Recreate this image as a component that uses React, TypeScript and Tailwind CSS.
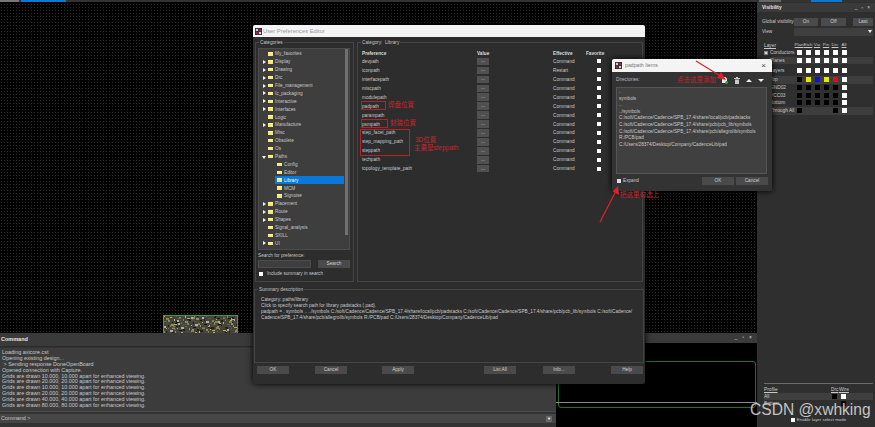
const categories = [
  { name: "My_favorites", arrow: "" },
  { name: "Display", arrow: "right" },
  { name: "Drawing", arrow: "right" },
  { name: "Drc", arrow: "right" },
  { name: "File_management", arrow: "right" },
  { name: "Ic_packaging", arrow: "right" },
  { name: "Interactive", arrow: "right" },
  { name: "Interfaces", arrow: "right" },
  { name: "Logic", arrow: "" },
  { name: "Manufacture", arrow: "right" },
  { name: "Misc", arrow: "" },
  { name: "Obsolete", arrow: "" },
  { name: "Os", arrow: "" },
  { name: "Paths", arrow: "down" },
  { name: "Config", arrow: "", child: true },
  { name: "Editor", arrow: "", child: true },
  { name: "Library", arrow: "", child: true, active: true },
  { name: "MCM", arrow: "", child: true },
  { name: "Signoise", arrow: "", child: true },
  { name: "Placement", arrow: "right" },
  { name: "Route", arrow: "right" },
  { name: "Shapes", arrow: "right" },
  { name: "Signal_analysis", arrow: "" },
  { name: "SKILL", arrow: "" },
  { name: "UI", arrow: "right" },
  { name: "Vi", arrow: "right" },
];

const prefs = [
  { name: "devpath", effective: "Command" },
  { name: "iconpath", effective: "Restart" },
  { name: "interfacepath", effective: "Command" },
  { name: "miscpath", effective: "Command" },
  { name: "modulepath", effective: "Command" },
  { name: "padpath", effective: "Command" },
  { name: "parampath", effective: "Command" },
  { name: "psmpath", effective: "Command" },
  { name: "step_facet_path", effective: "Command" },
  { name: "step_mapping_path", effective: "Command" },
  { name: "steppath", effective: "Command" },
  { name: "techpath", effective: "Command" },
  { name: "topology_template_path", effective: "Command" },
];

const directories = [
  ".",
  "symbols",
  "..",
  "../symbols",
  "C:/soft/Cadence/Cadence/SPB_17.4/share/local/pcb/padstacks",
  "C:/soft/Cadence/Cadence/SPB_17.4/share/pcb/pcb_lib/symbols",
  "C:/soft/Cadence/Cadence/SPB_17.4/share/pcb/allegrolib/symbols",
  "R:/PCB/pad",
  "C:/Users/28374/Desktop/Company/CadenceLib/pad",
];

const commandLog = [
  "Loading axicore.cst",
  "Opening existing design...",
  " > Sending response DoneOpenBoard",
  "Opened connection with Capture.",
  "Grids are drawn 10.000, 10.000 apart for enhanced viewing.",
  "Grids are drawn 20.000, 20.000 apart for enhanced viewing.",
  "Grids are drawn 10.000, 10.000 apart for enhanced viewing.",
  "Grids are drawn 20.000, 20.000 apart for enhanced viewing.",
  "Grids are drawn 40.000, 40.000 apart for enhanced viewing.",
  "Grids are drawn 80.000, 80.000 apart for enhanced viewing.",
];

const visRows = [
  { label: "Conductors", check: true, cells: ["w", "w", "w", "w", "w", "w"], band: false },
  { label: "Planes", cells: ["w", "w", "w", "w", "w", "w"], band: true },
  { label: "Layers", cells: ["w", "w", "w", "w", "w", "w"], band: false, gap: true },
  { label: "Top", cells: ["k", "#e6e600", "#1010e0", "#e6e600", "#e01010", "w"], band: true, gap: true },
  { label: "GND02", cells: ["k", "k", "k", "k", "k", "w"], band: false },
  { label: "VCC03", cells: ["k", "k", "k", "k", "k", "w"], band: false },
  { label: "Bottom", cells: ["k", "k", "k", "k", "k", "w"], band: false },
  { label: "Through All", cells: ["k", "", "", "", "k", "w"], band: true },
];

const pcbBits = Array.from({ length: 170 }, (_, i) => ({
  x: (i * 29 + (i % 7) * 11) % 74,
  y: (i * 13 + (i % 5) * 3) % 18,
  w: 1 + (i % 3),
  h: 1 + (i % 2),
  c: ["#b8b030", "#8a8a78", "#565648", "#b0b0a0", "#141414", "#8a8430", "#66665c", "#1e1e1e"][i % 8],
}));

function AppIcon() {
  return (
    <svg width="7" height="7" viewBox="0 0 8 8" className="shrink-0">
      <rect width="8" height="8" fill="#2c2c34" />
      <rect x="1" y="1" width="2.5" height="2.5" fill="#d0d0d8" />
      <rect x="4.5" y="1" width="2.5" height="2.5" fill="#b02040" />
      <rect x="1" y="4.5" width="2.5" height="2.5" fill="#b02040" />
      <rect x="4.5" y="4.5" width="2.5" height="2.5" fill="#d0d0d8" />
    </svg>
  );
}

function Folder() {
  return <span className="block w-[5px] h-[3.5px] bg-[#f4e878] shrink-0 mr-[2px] border-t border-[#fff6a0]" />;
}

function Arrow({ dir }: { dir: string }) {
  if (!dir) return <span className="block w-[4px] shrink-0" />;
  return (
    <svg width="4" height="4" viewBox="0 0 4 4" className="shrink-0">
      <polygon points={dir === "down" ? "0,1 4,1 2,4" : "1,0 4,2 1,4"} fill="#f2f2f2" />
    </svg>
  );
}

function GroupTitle({ children }: { children: React.ReactNode }) {
  return (
    <span className="absolute -top-[3px] left-[3px] bg-[#2d2d2d] px-[1px] text-[4.7px] leading-[6px] text-[#c4c4c4]">
      {children}
    </span>
  );
}

function DlgButton({ label, className }: { label: string; className: string }) {
  return (
    <button className={`h-[8px] bg-[#4a4a4a] text-[4.7px] leading-[8px] text-[#cfcfcf] ${className}`}>{label}</button>
  );
}

function RedBox({ className }: { className: string }) {
  return <div className={`absolute border border-[#b5202a] ${className}`} />;
}

function RedNote({ text, className }: { text: string; className: string }) {
  return <span className={`absolute text-[6.5px] leading-[8px] text-[#c6262e] whitespace-nowrap ${className}`}>{text}</span>;
}

export default function App() {
  return (
    <div
      className="relative w-[875px] h-[427px] overflow-hidden bg-black text-[5px] text-[#c8c8c8]"
      style={{ fontFamily: '"Liberation Sans", "Noto Sans CJK SC", sans-serif' }}
    >
      {/* board canvas */}
      <div className="absolute inset-0 bg-[radial-gradient(#2c2c2c_0.6px,transparent_0.7px)] bg-[length:3px_3px]" />
      <div className="absolute top-0 left-0 w-[757px] h-[2px] bg-[#333333] flex">
        <span className="block w-[19px] bg-[#777777]" />
        <span className="block ml-[2px] w-[45px] bg-[#0a78d8]" />
      </div>

      {/* pcb */}
      <div className="absolute left-[163px] top-[315px] w-[75px] h-[18px] border border-b-0 border-[#2aa050] bg-[#44443a] overflow-hidden">
        <svg width="75" height="18" viewBox="0 0 75 18">
          {pcbBits.map((b, i) => (
            <rect key={i} x={b.x} y={b.y} width={b.w} height={b.h} fill={b.c} />
          ))}
        </svg>
      </div>

      {/* command window */}
      <div className="absolute left-0 top-[333px] w-[556px] h-[94px] bg-[#333333] flex flex-col text-[5.4px]">
        <div className="h-[14px] bg-[#3a3a3a] pl-[1px] font-bold text-[5.5px] leading-[12px] text-[#e6e6e6] border-b border-[#2a2a2a]">
          Command
        </div>
        <div className="mt-[1px] h-[64px] bg-[#3c3c3c] pl-[2px] pt-[2px] border-b border-[#4a4a4a]">
          {commandLog.map((line, i) => (
            <div key={i} className="h-[5.9px] leading-[5.9px] whitespace-pre text-[#c8c8c8]">{line}</div>
          ))}
        </div>
        <div className="mt-[2px] h-[9px] bg-[#464646] pl-[1px] flex items-center justify-between pr-[4px]">
          <span>Command &gt;</span>
          <span className="block w-[6px] h-[6px] bg-[#666666] text-center text-[4px] leading-[6px] text-white">▼</span>
        </div>
      </div>

      {/* lower canvas window */}
      <div className="absolute left-[556px] top-[333px] w-[201px] h-[94px] bg-black flex flex-col">
        <div className="h-[10px] bg-[#3a3a3a] flex items-center justify-end gap-[5px] pr-[5px] text-[5px] text-[#dddddd]">
          <span>_</span>
          <span>▫</span>
          <span>×</span>
        </div>
        <div className="relative grow">
          <div className="absolute left-[2px] top-[18px] right-[1px] h-[47px] border border-[#14772f] rounded-[3px]" />
          <div className="absolute left-0 right-0 top-[59px] h-[1px] bg-[#8a8a8a]" />
        </div>
      </div>

      {/* visibility panel */}
      <aside className="absolute right-0 top-0 w-[118px] h-[427px] bg-[#2f2f2f] flex flex-col text-[4.8px]">
        <div className="h-[2px] flex bg-[#333333]">
          <span className="block ml-[2px] w-[22px] bg-[#666666]" />
          <span className="block ml-[30px] w-[31px] bg-[#0a78d8]" />
        </div>
        <div className="h-[9px] mt-[1px] bg-[#3a3a3a] pl-[5px] flex items-center justify-between pr-[5px] font-bold text-[#e0e0e0]">
          <span>Visibility</span>
          <span className="flex gap-[4px] font-normal text-[#cccccc]"><span>_</span><span>▫</span><span>×</span></span>
        </div>
        <div className="pl-[5px] pr-[2px] pt-[5px]">
          <div className="flex items-center h-[9px]">
            <span className="whitespace-nowrap">Global visibility</span>
            <div className="flex ml-auto">
              <button className="w-[24px] h-[8px] bg-[#4a4a4a] leading-[8px] text-[#d0d0d0]">On</button>
              <button className="w-[25px] h-[8px] ml-[3px] bg-[#4a4a4a] leading-[8px] text-[#d0d0d0]">Off</button>
              <button className="w-[20px] h-[8px] ml-[7px] bg-[#4a4a4a] leading-[8px] text-[#d0d0d0]">Last</button>
            </div>
          </div>
          <div className="flex items-center h-[9px] mt-[1px]">
            <span>View</span>
            <div className="ml-auto w-[79px] h-[8px] bg-[#3f3f3f] flex items-center justify-end pr-[1px]">
              <svg width="4" height="3" viewBox="0 0 4 3"><polygon points="0,0 4,0 2,3" fill="#f0f0f0" /></svg>
            </div>
          </div>

          <div className="mt-[6px] flex h-[7px] items-center pl-[2px]">
            <span className="underline">Layer</span>
            <div className="ml-auto flex pr-[24.5px]">
              {["Plan", "Etch", "Via", "Pin", "Drc", "All"].map((h) => (
                <span key={h} className="flex w-[9px] justify-center text-[4.4px] underline whitespace-nowrap">{h}</span>
              ))}
            </div>
          </div>
          {visRows.map((r) => (
            <div key={r.label} className={`flex items-center h-[7.7px] pl-[2px] ${r.band ? "bg-[#3d3d3d]" : ""} ${r.gap ? "mt-[2px]" : ""}`}>
              {r.check && <span className="block w-[4px] h-[4px] mr-[2px] bg-[#dddddd] border border-[#888888]" />}
              <span className={r.check ? "" : "pl-[6px]"}>{r.label}</span>
              <div className="ml-auto flex pr-[24.5px]">
                {r.cells.map((c, i) => (
                  <span key={i} className="flex w-[9px] justify-center">
                    {c === "" ? (
                      <span className="block w-[5px] h-[5px]" />
                    ) : c === "w" ? (
                      <span className="block w-[5px] h-[5px] bg-white" />
                    ) : c === "k" ? (
                      <span className="block w-[5px] h-[5px] bg-black" />
                    ) : (
                      <span className="block w-[5px] h-[5px]" style={{ backgroundColor: c }} />
                    )}
                  </span>
                ))}
              </div>
            </div>
          ))}
        </div>

        <div className="mt-auto pl-[7px] pr-[2px] pb-[4px]">
          <div className="h-[1px] bg-[#6a6a6a] mb-[2px]" />
          <div className="flex h-[7px] items-center">
            <span className="underline">Profile</span>
            <span className="ml-auto w-[8px] underline">Drc</span>
            <span className="w-[34px] underline">Wire</span>
          </div>
          <div className="flex h-[7px] items-center bg-[#3f3f3f]">
            <span>All</span>
            <span className="ml-auto block w-[5px] h-[5px] bg-black" />
            <span className="block ml-[4px] mr-[27px] w-[5px] h-[5px] bg-white" />
          </div>
          <div className="flex h-[7px] items-center">
            <span>Bottom</span>
            <span className="ml-auto block w-[5px] h-[5px] mr-[27px] bg-black" />
          </div>
          <label className="mt-[10px] flex h-[6px] items-center justify-center text-[4.4px]">
            <span className="block w-[4px] h-[4px] bg-white mr-[2px]" />
            Enable layer select mode
          </label>
        </div>
      </aside>

      {/* user preferences editor */}
      <div className="absolute left-[253px] top-[25px] w-[392px] h-[359px] bg-[#2d2d2d] rounded-[2px] flex flex-col text-[4.7px] shadow-[0_0_6px_#000]">
        <div className="h-[12px] bg-[#f4f4f4] flex items-center pl-[2px] gap-[1px] text-[5.8px] text-[#999999] rounded-t-[2px]">
          <AppIcon />
          User Preferences Editor
        </div>
        <div className="flex gap-[3px] pl-[2px] pr-[2px] mt-[5px]">
          <div className="relative w-[99px] h-[240px] border border-[#454545] pl-[2px] pr-[3px] pt-[5px]">
            <GroupTitle>Categories</GroupTitle>
            <div className="relative h-[202px] bg-[#3e3e3e] overflow-hidden pt-[1px] border border-[#4c4c4c]">
              {categories.map((c) => (
                <div key={c.name} className={`flex items-center h-[7.9px] ${c.child ? "pl-[15px]" : "pl-[3px]"}`}>
                  {!c.child && <Arrow dir={c.arrow} />}
                  <div className={`flex items-center ml-[1px] h-full grow ${c.active ? "bg-[#0a78d8] text-white" : ""} mr-[5px]`}>
                    {c.child && <span className="block w-[2px]" />}
                    {!c.child && <span className="block w-[1px]" />}
                    <Folder />
                    <span className="whitespace-nowrap">{c.name}</span>
                  </div>
                </div>
              ))}
              <div className="absolute right-[1px] top-0 w-[3px] h-[186px] bg-[#707070]" />
            </div>
            <div className="mt-[3px] h-[6px] leading-[6px] text-[#c4c4c4]">Search for preference:</div>
            <div className="mt-[1px] flex justify-between">
              <div className="w-[53px] h-[8px] bg-[#3e3e3e] border border-[#4c4c4c]" />
              <DlgButton label="Search" className="w-[32px]" />
            </div>
            <label className="mt-[2px] flex items-center h-[7px] pl-[1px]">
              <span className="block w-[4px] h-[4px] bg-white mr-[4px]" />
              Include summary in search
            </label>
          </div>

          <div className="relative grow h-[240px] border border-[#454545] pl-[4px] pt-[7px]">
            <GroupTitle>Category:&nbsp;&nbsp;Library</GroupTitle>
            <div className="flex h-[7px] items-center font-bold text-[#dcdcdc]">
              <span className="w-[115px]">Preference</span>
              <span className="w-[76px]">Value</span>
              <span className="w-[33px]">Effective</span>
              <span>Favorite</span>
            </div>
            {prefs.map((p) => (
              <div key={p.name} className="flex h-[8.95px] items-center">
                <span className="w-[115px] whitespace-nowrap">{p.name}</span>
                <span className="w-[76px]">
                  <button className="block w-[12px] h-[7.5px] bg-[#505050] text-center leading-[6px] text-[#dddddd]">...</button>
                </span>
                <span className="w-[44px]">{p.effective}</span>
                <span className="block w-[4px] h-[4px] bg-white" />
              </div>
            ))}
          </div>
        </div>

        <div className="relative mx-[1px] mt-[7px] h-[74px] border border-[#454545] pl-[6px] pt-[7px]">
          <GroupTitle>Summary description</GroupTitle>
          <div className="h-[6px] leading-[6px]">Category: paths/library</div>
          <div className="h-[6px] leading-[6px]">Click to specify search path for library padstacks (.pad).</div>
          <div className="h-[6px] leading-[6px] whitespace-nowrap">padpath = . symbols .. ../symbols C:/soft/Cadence/Cadence/SPB_17.4/share/local/pcb/padstacks C:/soft/Cadence/Cadence/SPB_17.4/share/pcb/pcb_lib/symbols C:/soft/Cadence/</div>
          <div className="h-[6px] leading-[6px] whitespace-nowrap">Cadence/SPB_17.4/share/pcb/allegrolib/symbols R:/PCB/pad C:/Users/28374/Desktop/Company/CadenceLib/pad</div>
        </div>

        <div className="flex mt-[3px] pl-[4px]">
          <DlgButton label="OK" className="w-[32px]" />
          <DlgButton label="Cancel" className="w-[32px] ml-[26px]" />
          <DlgButton label="Apply" className="w-[32px] ml-[35px]" />
          <DlgButton label="List All" className="w-[32px] ml-[70px]" />
          <DlgButton label="Info..." className="w-[32px] ml-[27px]" />
          <DlgButton label="Help" className="w-[32px] ml-[36px]" />
        </div>
      </div>

      {/* padpath items */}
      <div className="absolute left-[612px] top-[59px] w-[160px] h-[132px] bg-[#333333] rounded-[2px] flex flex-col text-[4.7px] shadow-[0_0_6px_#000]">
        <div className="h-[13px] bg-[#f4f4f4] flex items-center pl-[3px] gap-[1px] text-[5.2px] text-[#777777] rounded-t-[2px]">
          <AppIcon />
          <span className="ml-[2px]">padpath Items</span>
          <span className="ml-auto mr-[6px] text-[8px] leading-[8px] text-[#444444]">×</span>
        </div>
        <div className="flex items-center h-[8px] mt-[4px] pl-[4px] pr-[8px] text-[#bbbbbb]">
          <span>Directories:</span>
          <div className="ml-auto flex items-center gap-[6px]">
            <svg width="6" height="7" viewBox="0 0 6 7">
              <path d="M0 0h3.5L5 1.5V6H0z" fill="#e6e6e6" />
              <circle cx="4.6" cy="5.4" r="1.5" fill="#22a84a" />
            </svg>
            <svg width="6" height="7" viewBox="0 0 6 7">
              <path d="M0 1h6v1H0zM1 2.5h4V7H1zM2 0h2v1H2z" fill="#c8c8c8" />
            </svg>
            <svg width="6" height="3" viewBox="0 0 6 3"><polygon points="3,0 6,3 0,3" fill="#f0f0f0" /></svg>
            <svg width="6" height="3" viewBox="0 0 6 3"><polygon points="0,0 6,0 3,3" fill="#f0f0f0" /></svg>
          </div>
        </div>
        <div className="mx-[4px] mt-[3px] h-[87px] w-[151px] bg-[#404040] border border-[#555555] pl-[2px] pt-[1px] overflow-hidden">
          {directories.map((d) => (
            <div key={d} className="h-[6.6px] leading-[6.6px] whitespace-nowrap">{d}</div>
          ))}
        </div>
        <div className="flex items-center mt-[3px] pl-[5px] pr-[4px]">
          <span className="block w-[4px] h-[4px] bg-[#dddddd] mr-[2px]" />
          <span>Expand</span>
          <DlgButton label="OK" className="ml-auto w-[32px]" />
          <DlgButton label="Cancel" className="ml-[2px] w-[32px]" />
        </div>
      </div>

      {/* annotations */}
      <RedBox className="left-[361px] top-[101px] w-[25px] h-[9px]" />
      <RedBox className="left-[361px] top-[119px] w-[27px] h-[9px]" />
      <RedBox className="left-[360px] top-[129px] w-[50px] h-[27px]" />
      <RedNote text="焊盘位置" className="left-[388px] top-[101px]" />
      <RedNote text="封装位置" className="left-[390px] top-[119px]" />
      <RedNote text="3D位置" className="left-[415px] top-[136px]" />
      <RedNote text="主要是steppath" className="left-[414px] top-[144px]" />
      <RedNote text="点击这里添加" className="left-[677px] top-[76px]" />
      <RedNote text="把这里勾选上" className="left-[620px] top-[191px]" />
      <svg className="absolute left-0 top-0 pointer-events-none" width="875" height="427" viewBox="0 0 875 427">
        <path d="M696 61 L722 77" stroke="#d8232a" strokeWidth="1.3" />
        <polygon points="726,80 717,78 721,72" fill="#d8232a" />
        <path d="M600 222 L616 191" stroke="#d8232a" strokeWidth="1.3" />
        <polygon points="618,186 619,195 612.5,191.5" fill="#d8232a" />
      </svg>

      {/* watermark */}
      <span
        className="absolute left-[750px] top-[400px] text-[15.6px] leading-[20px] text-[#c4c4c4] whitespace-nowrap"
        style={{ fontFamily: '"Liberation Sans", sans-serif' }}
      >
        CSDN @xwhking
      </span>
    </div>
  );
}
